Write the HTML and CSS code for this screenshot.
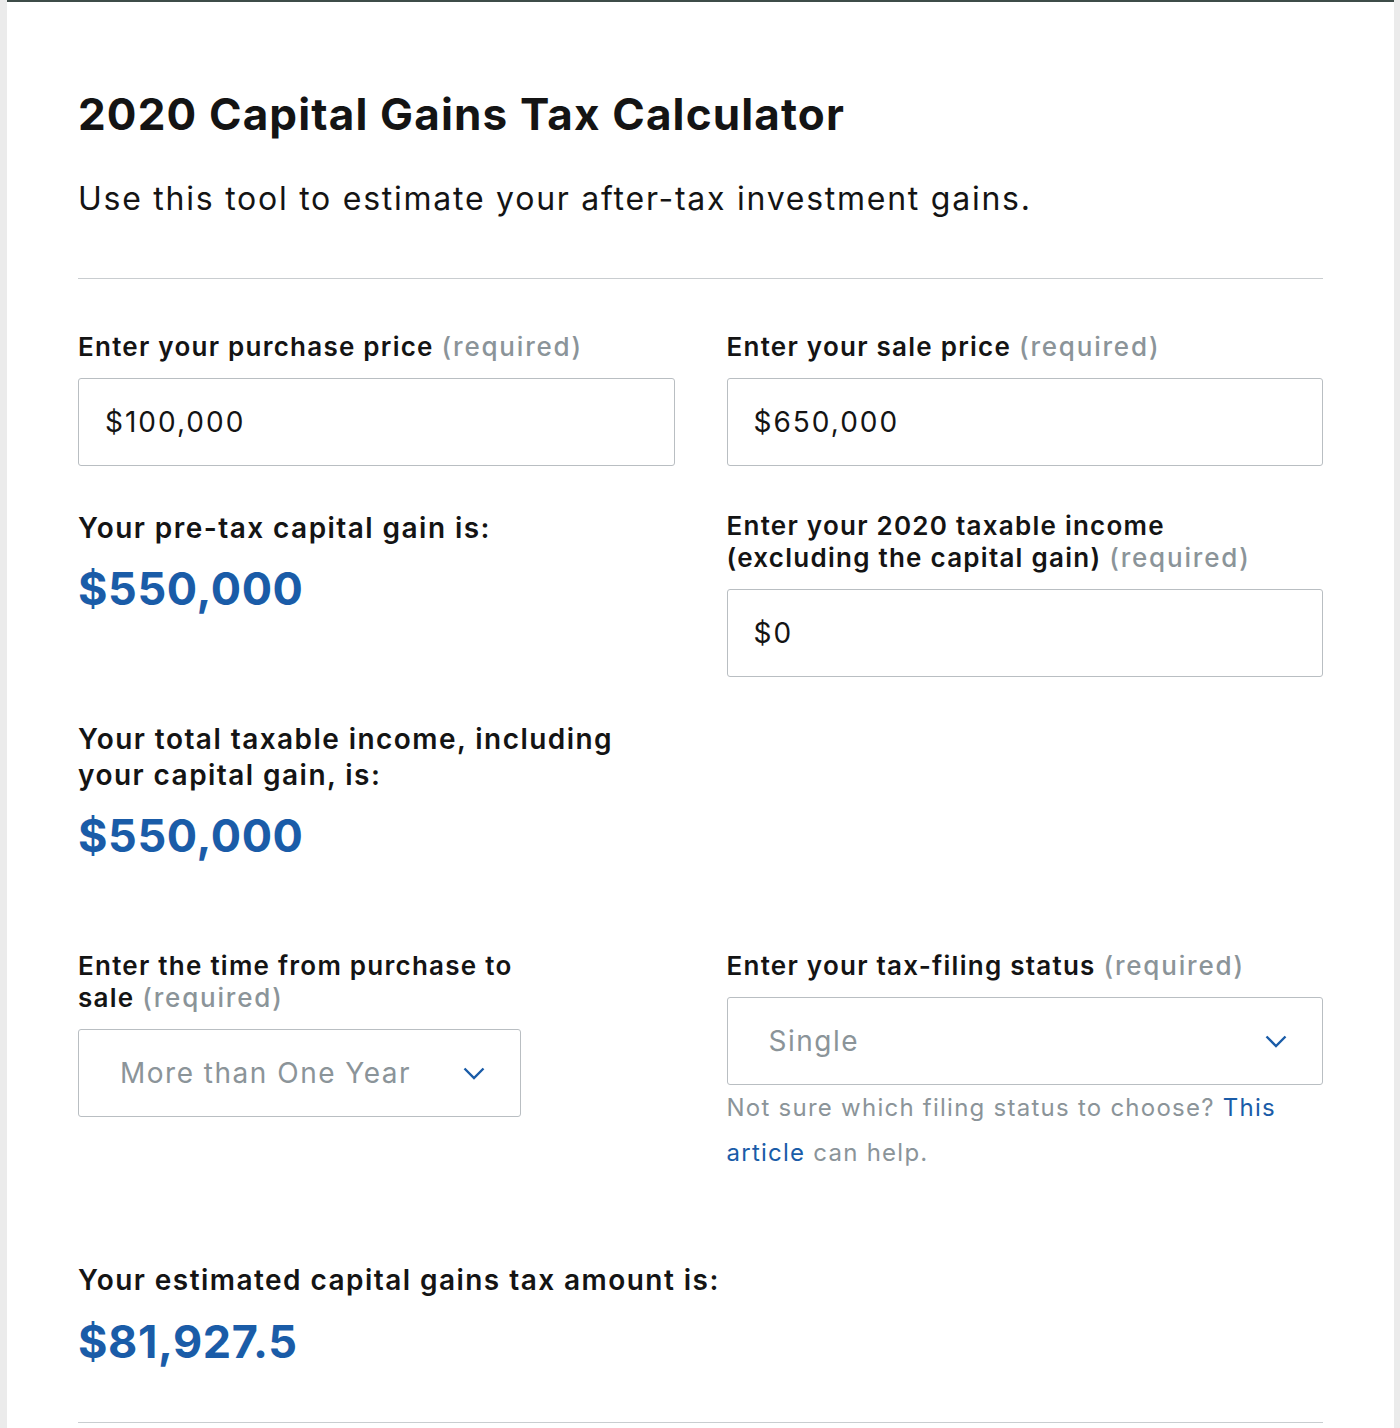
FILE: index.html
```html
<!DOCTYPE html>
<html lang="en">
<head>
<meta charset="utf-8">
<title>2020 Capital Gains Tax Calculator</title>
<link rel="stylesheet" href="styles.css">
</head>
<body>
<main class="card">
  <h1 class="title">2020 Capital Gains Tax Calculator</h1>
  <p class="intro">Use this tool to estimate your after-tax investment gains.</p>
  <hr class="rule">

  <div class="grid">
    <div class="field">
      <label class="label">Enter your purchase price <span class="req">(required)</span></label>
      <div class="input">$100,000</div>
    </div>
    <div class="field">
      <label class="label">Enter your sale price <span class="req">(required)</span></label>
      <div class="input">$650,000</div>
    </div>

    <div class="result">
      <p class="result-label">Your pre-tax capital gain is:</p>
      <p class="amount">$550,000</p>
    </div>
    <div class="field">
      <label class="label">Enter your 2020 taxable income<br>(excluding the capital gain) <span class="req">(required)</span></label>
      <div class="input">$0</div>
    </div>

    <div class="result">
      <p class="result-label">Your total taxable income, including<br>your capital gain, is:</p>
      <p class="amount">$550,000</p>
    </div>
    <div></div>

    <div class="field">
      <label class="label">Enter the time from purchase to<br>sale <span class="req">(required)</span></label>
      <div class="select narrow">
        <span>More than One Year</span>
        <svg class="chev" width="22" height="13" viewBox="0 0 22 13"><path d="M1.5 1.5 L11 11 L20.5 1.5" fill="none" stroke="#1a5ca8" stroke-width="2.4"/></svg>
      </div>
    </div>
    <div class="field">
      <label class="label">Enter your tax-filing status <span class="req">(required)</span></label>
      <div class="select">
        <span>Single</span>
        <svg class="chev" width="22" height="13" viewBox="0 0 22 13"><path d="M1.5 1.5 L11 11 L20.5 1.5" fill="none" stroke="#1a5ca8" stroke-width="2.4"/></svg>
      </div>
      <p class="help">Not sure which filing status to choose? <a href="#" class="link">This</a><br><a href="#" class="link">article</a> can help.</p>
    </div>
  </div>

  <div class="result final">
    <p class="result-label">Your estimated capital gains tax amount is:</p>
    <p class="amount">$81,927.5</p>
  </div>
  <hr class="rule bottom">
</main>
</body>
</html>
```

FILE: styles.css
```css
* { box-sizing: border-box; }

html, body {
  margin: 0;
  padding: 0;
  background: #ebebeb;
}

body {
  font-family: Inter, "Open Sans", sans-serif;
  color: #141414;
}

.card {
  margin: 0 6px 0 7px;
  min-height: 1428px;
  background: #ffffff;
  border-top: 2px solid #3e4c48;
  padding: 0 71px;
}

.title {
  margin: 0;
  padding-top: 84px;
  font-size: 44px;
  line-height: 56px;
  font-weight: 700;
  letter-spacing: 1.15px;
}

.intro {
  margin: 37px 0 0;
  font-size: 32px;
  line-height: 40px;
  font-weight: 400;
  letter-spacing: 1.75px;
}

.rule {
  margin: 59px 0 0;
  border: 0;
  border-top: 1px solid #c9cdd0;
  height: 0;
}

.grid {
  margin-top: 52px;
  display: grid;
  grid-template-columns: 1fr 1fr;
  column-gap: 52px;
  row-gap: 44px;
  align-items: start;
}

.label {
  display: block;
  font-size: 26px;
  line-height: 32px;
  font-weight: 600;
  letter-spacing: 1.25px;
}

.req {
  color: #8b9499;
  font-weight: 500;
  letter-spacing: 1.8px;
}

.input,
.select {
  margin-top: 15px;
  height: 88px;
  border: 1px solid #b9bec2;
  border-radius: 3px;
  display: flex;
  align-items: center;
  font-size: 28px;
}

.input {
  padding-left: 26px;
  color: #141414;
  letter-spacing: 2px;
}

.select {
  padding: 0 35px 0 41px;
  justify-content: space-between;
  color: #8b9499;
  letter-spacing: 1.5px;
}

.select.narrow {
  width: 443px;
}

.chev {
  display: block;
}

.help {
  margin: 0;
  font-size: 24px;
  line-height: 45px;
  color: #8b9499;
  letter-spacing: 1.25px;
}

.link {
  color: #1a5ca8;
  text-decoration: none;
}

.result {
  margin-bottom: 42px;
}

.result-label {
  margin: 0;
  font-size: 28px;
  line-height: 36px;
  font-weight: 600;
  letter-spacing: 1.45px;
}

.amount {
  margin: 15px 0 0;
  font-size: 45px;
  line-height: 56px;
  font-weight: 700;
  color: #1a5ca8;
  letter-spacing: 0.6px;
}

.result.final {
  margin: 87px 0 0;
}

.result.final .amount {
  margin-top: 16px;
}

.rule.bottom {
  margin-top: 52px;
}
```
